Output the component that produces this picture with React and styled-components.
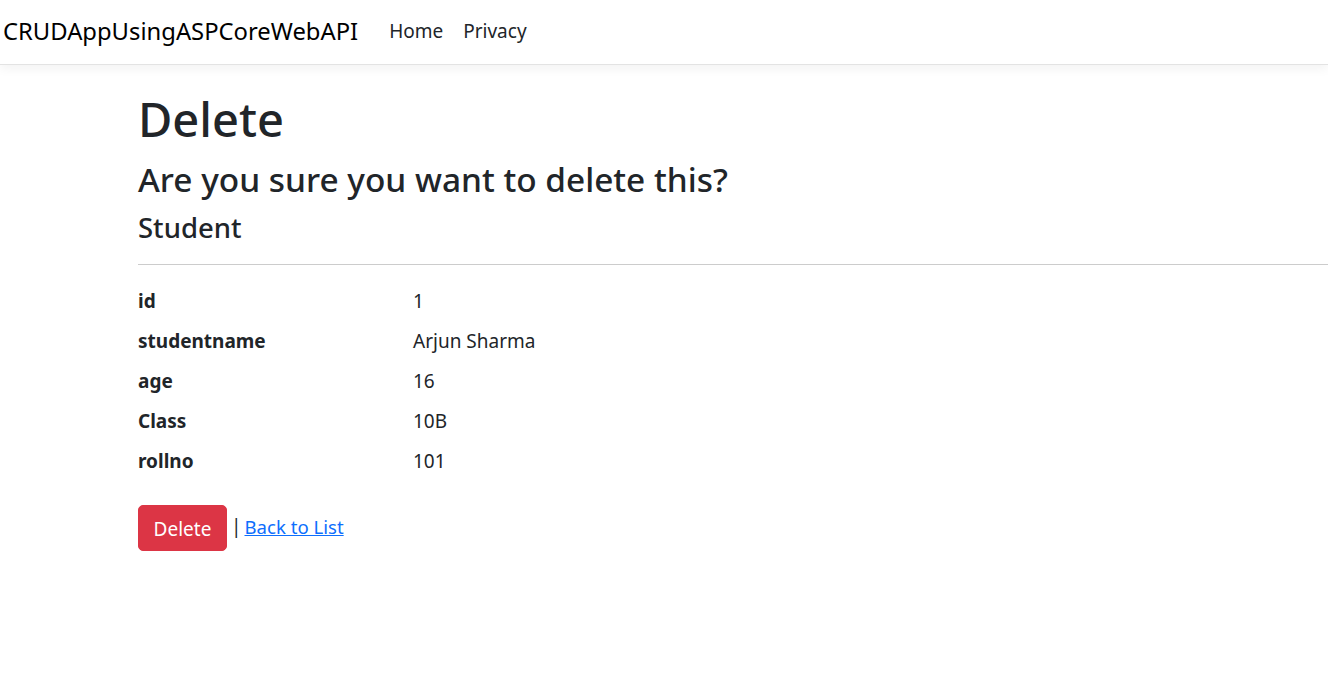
import React from "react";
import styled, { createGlobalStyle } from "styled-components";

const GlobalStyle = createGlobalStyle`
  html, body {
    margin: 0;
    padding: 0;
    background: #ffffff;
    font-family: "Noto Sans", "Open Sans", sans-serif;
    color: #212529;
  }
`;

const Navbar = styled.nav`
  height: 65px;
  box-sizing: border-box;
  border-bottom: 1px solid #e3e3e3;
  box-shadow: 0 4px 10px rgba(0, 0, 0, 0.05);
  display: flex;
  align-items: center;
  padding: 0 3px;
`;

const Brand = styled.a`
  font-size: 23.8px;
  color: #000000;
  text-decoration: none;
  margin-right: 31px;
  margin-top: -2px;
`;

const NavLink = styled.a`
  font-size: 19px;
  color: #212529;
  text-decoration: none;
  margin-right: 20px;
  margin-top: -3px;
`;

const Main = styled.main`
  padding: 24px 0 0 138px;
`;

const Title = styled.h1`
  margin: 0;
  font-size: 47px;
  font-weight: 500;
  line-height: 60px;
`;

const Question = styled.h3`
  margin: 10px 0 0;
  font-size: 33.4px;
  font-weight: 500;
  line-height: 40px;
`;

const ModelName = styled.h4`
  margin: 12px 0 0;
  font-size: 27.5px;
  font-weight: 500;
  line-height: 34px;
`;

const Rule = styled.hr`
  margin: 19px 0 21px;
  border: 0;
  border-top: 1px solid #cccccc;
`;

const Details = styled.dl`
  display: grid;
  grid-template-columns: 275px 1fr;
  margin: 0;
  font-size: 19px;
  line-height: 30px;
  row-gap: 10px;
`;

const Term = styled.dt`
  font-weight: 700;
`;

const Value = styled.dd`
  margin: 0;
`;

const Actions = styled.form`
  display: flex;
  align-items: center;
  margin-top: 29px;
  font-size: 19px;
`;

const DangerButton = styled.button`
  font-family: inherit;
  font-size: 19px;
  color: #ffffff;
  background: #dc3545;
  border: 1px solid #dc3545;
  border-radius: 5px;
  width: 89px;
  height: 46px;
  padding: 2px 0 0;
  cursor: pointer;
`;

const Sep = styled.span`
  margin: -4px 3px 0 4px;
`;

const BackLink = styled.a`
  color: #0d6efd;
  text-decoration: underline;
  margin-top: -4px;
  font-size: 18.6px;
`;

const student = [
  ["id", "1"],
  ["studentname", "Arjun Sharma"],
  ["age", "16"],
  ["Class", "10B"],
  ["rollno", "101"]
];

export default function App() {
  return (
    <>
      <GlobalStyle />
      <Navbar>
        <Brand href="#">CRUDAppUsingASPCoreWebAPI</Brand>
        <NavLink href="#">Home</NavLink>
        <NavLink href="#">Privacy</NavLink>
      </Navbar>
      <Main>
        <Title>Delete</Title>
        <Question>Are you sure you want to delete this?</Question>
        <ModelName>Student</ModelName>
        <Rule />
        <Details>
          {student.map(([k, v]) => (
            <React.Fragment key={k}>
              <Term>{k}</Term>
              <Value>{v}</Value>
            </React.Fragment>
          ))}
        </Details>
        <Actions onSubmit={e => e.preventDefault()}>
          <DangerButton type="submit">Delete</DangerButton>
          <Sep>|</Sep>
          <BackLink href="#">Back to List</BackLink>
        </Actions>
      </Main>
    </>
  );
}
